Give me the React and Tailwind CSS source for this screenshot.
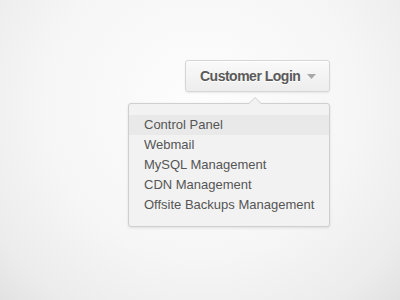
export default function App() {
  const items = ["Control Panel", "Webmail", "MySQL Management", "CDN Management", "Offsite Backups Management"];
  return (
    <div className="w-[400px] h-[300px] overflow-hidden bg-[radial-gradient(ellipse_at_50%_35%,#fdfdfd_0%,#f6f6f6_55%,#ececec_85%,#e2e2e2_100%)] flex flex-col items-end pt-[60px] pr-[70px]" style={{ fontFamily: '"Liberation Sans", Arial, sans-serif' }}>
      <div className="w-[145px] h-[32px] rounded-[3px] border border-[#d6d6d6] bg-[linear-gradient(#fafafa,#ededed)] shadow-[0_1px_2px_rgba(0,0,0,0.08),inset_0_1px_0_#fff] flex items-center pl-[14px] gap-[7px] whitespace-nowrap">
        <span className="text-[14px] font-bold tracking-[-0.5px] text-[#5a5a5a] [text-shadow:0_1px_0_#fff]">Customer Login</span>
        <svg width="9" height="5" viewBox="0 0 9 5" className="mt-[1px] shrink-0"><path d="M0 0h9L4.5 5z" fill="#a8a8a8" /></svg>
      </div>
      <div className="relative mt-[11px] w-[202px] h-[124px] rounded-[3px] border border-[#cfcfcf] bg-[#f2f2f2] shadow-[0_1px_3px_rgba(0,0,0,0.1)] pt-[11px]">
        <svg width="14" height="8" viewBox="0 0 14 8" className="absolute left-[119px] top-[-7px]">
          <path d="M0 7.5L7 0.5L14 7.5" fill="#f2f2f2" stroke="#cfcfcf" strokeWidth="1" />
          <rect x="0" y="7" width="14" height="1" fill="#f2f2f2" />
        </svg>
        {items.map((t, i) => (
          <div key={t} className={`h-[20px] flex items-center pl-[15px] text-[13px] text-[#555] ${i === 0 ? "bg-[#e9e9e9]" : ""}`}>{t}</div>
        ))}
      </div>
    </div>
  );
}
